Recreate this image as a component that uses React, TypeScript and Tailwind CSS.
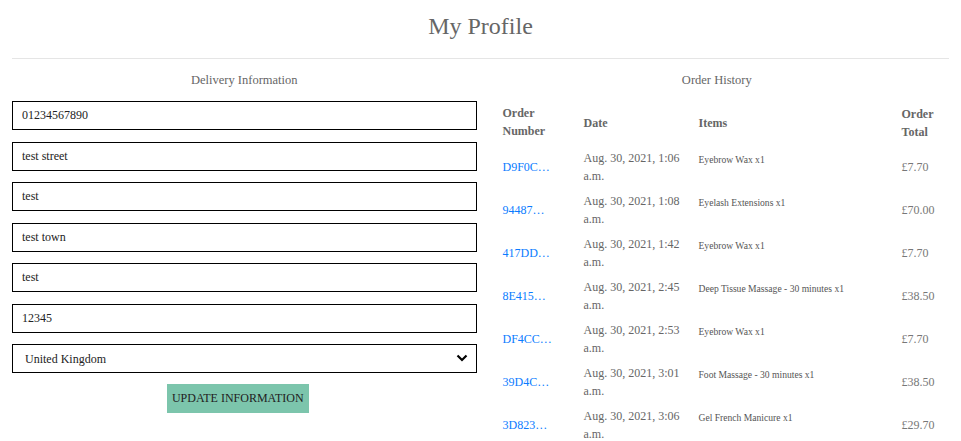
import React from "react";

interface Order {
    number: string;
    date: string;
    items: string;
    total: string;
}

const orders: Order[] = [
    { number: "D9F0C…", date: "Aug. 30, 2021, 1:06 a.m.", items: "Eyebrow Wax x1", total: "£7.70" },
    { number: "94487…", date: "Aug. 30, 2021, 1:08 a.m.", items: "Eyelash Extensions x1", total: "£70.00" },
    { number: "417DD…", date: "Aug. 30, 2021, 1:42 a.m.", items: "Eyebrow Wax x1", total: "£7.70" },
    { number: "8E415…", date: "Aug. 30, 2021, 2:45 a.m.", items: "Deep Tissue Massage - 30 minutes x1", total: "£38.50" },
    { number: "DF4CC…", date: "Aug. 30, 2021, 2:53 a.m.", items: "Eyebrow Wax x1", total: "£7.70" },
    { number: "39D4C…", date: "Aug. 30, 2021, 3:01 a.m.", items: "Foot Massage - 30 minutes x1", total: "£38.50" },
    { number: "3D823…", date: "Aug. 30, 2021, 3:06 a.m.", items: "Gel French Manicure x1", total: "£29.70" },
];

const fields = ["01234567890", "test street", "test", "test town", "test", "12345"];

const App: React.FC = () => {
    return (
        <div className="min-h-[441px] bg-white px-3 pt-2 font-['Liberation_Serif',serif] text-[#666]">
            <h1 className="text-center text-[24px] leading-[36px]">My Profile</h1>
            <div className="mt-[14px] border-t border-[#e5e5e5]" />

            <div className="grid grid-cols-2 gap-2">
                {/* delivery details */}
                <div className="flex flex-col">
                    <h2 className="mt-[11px] text-center text-[12.5px] leading-[20px]">Delivery Information</h2>
                    <form className="mt-[11px] flex flex-col gap-[11.5px]">
                        {fields.map((value, i) => (
                            <input
                                key={i}
                                defaultValue={value}
                                className="h-[29px] w-full border border-black pl-[9px] text-[12px] text-[#222] outline-none"
                            />
                        ))}
                        <div className="relative">
                            <select
                                defaultValue="GB"
                                className="h-[29px] w-full appearance-none border border-black bg-white pl-[12px] text-[12px] text-[#222] outline-none"
                            >
                                <option value="GB">United Kingdom</option>
                            </select>
                            <svg
                                className="pointer-events-none absolute right-[9px] top-[10px]"
                                width="12"
                                height="8"
                                viewBox="0 0 12 8"
                                fill="none"
                            >
                                <polyline points="1.5,1.5 6,6 10.5,1.5" stroke="black" strokeWidth="2.2" />
                            </svg>
                        </div>
                        <button
                            type="button"
                            className="mr-[13px] -mt-[1px] h-[29px] self-center bg-[#7cc5ac] px-[5px] text-[12px] text-[#222]"
                        >
                            UPDATE INFORMATION
                        </button>
                    </form>
                </div>

                {/* order history */}
                <div className="flex flex-col">
                    <h2 className="mt-[11px] text-center text-[12.5px] leading-[20px]">Order History</h2>
                    <table className="mt-[10px] ml-[6px] w-[471px] table-fixed border-collapse text-[12px] leading-[18px]">
                        <colgroup>
                            <col className="w-[81px]" />
                            <col className="w-[115px]" />
                            <col className="w-[203px]" />
                            <col className="w-[72px]" />
                        </colgroup>
                        <thead>
                            <tr className="text-left font-bold">
                                <th className="pt-[4px] pb-[5px] pl-3 pr-1 align-middle">Order Number</th>
                                <th className="pl-3 pr-1 align-middle">Date</th>
                                <th className="pl-3 pr-1 align-middle">Items</th>
                                <th className="pl-3 pr-1 align-middle">Order Total</th>
                            </tr>
                        </thead>
                        <tbody>
                            {orders.map((o) => (
                                <tr key={o.number}>
                                    <td className="pt-[4px] pb-[3px] pl-3 pr-1 align-middle text-[#0a7cff]">{o.number}</td>
                                    <td className="pt-[4px] pb-[3px] pl-3 pr-1 align-middle">{o.date}</td>
                                    <td className="pt-[8px] pl-3 pr-1 align-top text-[9.6px] leading-[14px] text-[#555]">{o.items}</td>
                                    <td className="pl-3 pr-1 align-middle text-[#777]">{o.total}</td>
                                </tr>
                            ))}
                        </tbody>
                    </table>
                </div>
            </div>
        </div>
    );
};

export default App;
